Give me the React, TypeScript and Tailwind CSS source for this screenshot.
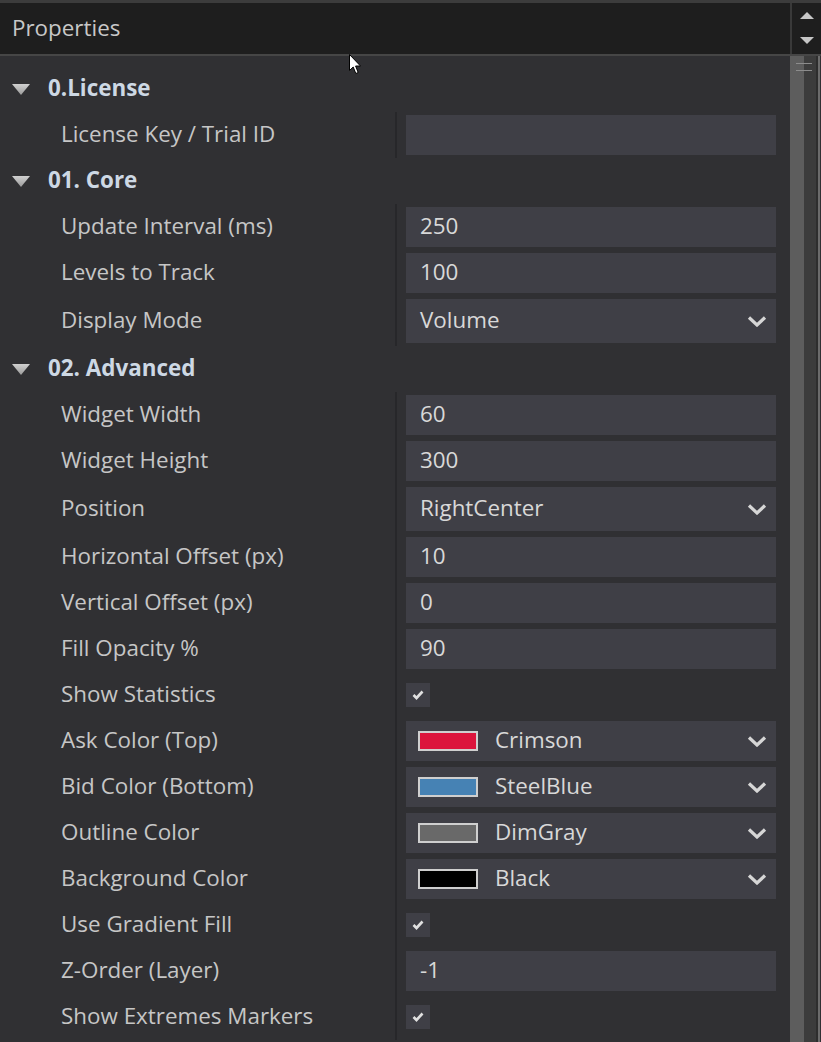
import React from 'react';

type Row =
  | { kind: 'section'; title: string }
  | { kind: 'text'; label: string; value: string }
  | { kind: 'select'; label: string; value: string }
  | { kind: 'check'; label: string }
  | { kind: 'color'; label: string; value: string; swatch: string };

const rows: Row[] = [
  { kind: 'section', title: '0.License' },
  { kind: 'text', label: 'License Key / Trial ID', value: '' },
  { kind: 'section', title: '01. Core' },
  { kind: 'text', label: 'Update Interval (ms)', value: '250' },
  { kind: 'text', label: 'Levels to Track', value: '100' },
  { kind: 'select', label: 'Display Mode', value: 'Volume' },
  { kind: 'section', title: '02. Advanced' },
  { kind: 'text', label: 'Widget Width', value: '60' },
  { kind: 'text', label: 'Widget Height', value: '300' },
  { kind: 'select', label: 'Position', value: 'RightCenter' },
  { kind: 'text', label: 'Horizontal Offset (px)', value: '10' },
  { kind: 'text', label: 'Vertical Offset (px)', value: '0' },
  { kind: 'text', label: 'Fill Opacity %', value: '90' },
  { kind: 'check', label: 'Show Statistics' },
  { kind: 'color', label: 'Ask Color (Top)', value: 'Crimson', swatch: '#dc143c' },
  { kind: 'color', label: 'Bid Color (Bottom)', value: 'SteelBlue', swatch: '#4682b4' },
  { kind: 'color', label: 'Outline Color', value: 'DimGray', swatch: '#696969' },
  { kind: 'color', label: 'Background Color', value: 'Black', swatch: '#000000' },
  { kind: 'check', label: 'Use Gradient Fill' },
  { kind: 'text', label: 'Z-Order (Layer)', value: '-1' },
  { kind: 'check', label: 'Show Extremes Markers' },
];

const Chevron = () => (
  <svg width="20" height="12" viewBox="0 0 20 12" className="shrink-0">
    <path d="M2 2.5 L10 10 L18 2.5" fill="none" stroke="#d6d6d6" strokeWidth="3.2" />
  </svg>
);

const Check = () => (
  <svg width="12" height="10" viewBox="0 0 12 10">
    <path d="M1.5 5 L4.5 8 L10.5 1.5" fill="none" stroke="#e0e0e0" strokeWidth="2.6" />
  </svg>
);

const Caret = () => (
  <svg width="18" height="11" viewBox="0 0 18 11">
    <defs>
      <linearGradient id="caret" x1="0" y1="0" x2="0" y2="1">
        <stop offset="0" stopColor="#d0d0d0" />
        <stop offset="1" stopColor="#9a9a9a" />
      </linearGradient>
    </defs>
    <polygon points="0,0 18,0 9,11" fill="url(#caret)" />
  </svg>
);

function Value({ row }: { row: Row }) {
  if (row.kind === 'check') {
    return (
      <div className="w-[24px] h-[24px] bg-[#3f3f46] flex items-center justify-center">
        <Check />
      </div>
    );
  }
  if (row.kind === 'select') {
    return (
      <div className="w-[370px] h-[44px] bg-[#3f3f46] flex items-center pl-[14px] pr-[9px] text-[#d8d8d8]">
        <span className="flex-1 pb-[1px]">{row.value}</span>
        <Chevron />
      </div>
    );
  }
  if (row.kind === 'color') {
    return (
      <div className="w-[370px] h-[40px] bg-[#3f3f46] flex items-center pl-[12px] pr-[9px] text-[#d8d8d8]">
        <div
          className="w-[60px] h-[20px] border-2 border-[#cfcfcf] shrink-0"
          style={{ backgroundColor: row.swatch }}
        />
        <span className="flex-1 ml-[17px] pb-[1px]">{row.value}</span>
        <Chevron />
      </div>
    );
  }
  if (row.kind === 'text') {
    return (
      <div className="w-[370px] h-[40px] bg-[#3f3f46] flex items-center pl-[14px] pb-[1px] text-[#d8d8d8]">
        {row.value}
      </div>
    );
  }
  return null;
}

function PropertyRow({ row }: { row: Row }) {
  if (row.kind === 'section') {
    return (
      <div className="h-[46px] flex items-center">
        <div className="ml-[12px] w-[36px]">
          <Caret />
        </div>
        <span className="font-bold text-[#cdd8e4] pb-[1px]">{row.title}</span>
      </div>
    );
  }
  const tall = row.kind === 'select';
  return (
    <div className={`flex ${tall ? 'h-[50px]' : 'h-[46px]'}`}>
      <div className="w-[395px] pl-[61px] pb-[1px] flex items-center text-[#c6c6c6]">{row.label}</div>
      <div className="w-[2px] bg-[#27272a]" />
      <div className="flex-1 pl-[9px] flex items-center">
        <Value row={row} />
      </div>
    </div>
  );
}

export default function App() {
  return (
    <div className="relative w-[821px] h-[1042px] overflow-hidden bg-[#303033] flex flex-col font-['Open_Sans',sans-serif] text-[22.4px] leading-none">
      <div className="h-[56px] shrink-0 flex bg-[#1e1e1e] border-t-[3px] border-t-[#3c3c3c] border-b-2 border-b-[#464646]">
        <div className="flex-1 flex items-center pl-[12px] pb-[1px] text-[#c8c8c8]">Properties</div>
        <div className="w-[2px] bg-[#393939]" />
        <div className="w-[29px] flex flex-col items-center justify-between pt-[9px] pb-[10px]">
          <svg width="14" height="7" viewBox="0 0 14 7">
            <polygon points="7,0 14,7 0,7" fill="#c6c6c6" />
          </svg>
          <svg width="14" height="7" viewBox="0 0 14 7">
            <polygon points="0,0 14,0 7,7" fill="#c6c6c6" />
          </svg>
        </div>
      </div>

      <div className="flex flex-1">
        <div className="w-[790px] pt-[10px]">
          {rows.map((row, i) => (
            <PropertyRow key={i} row={row} />
          ))}
        </div>

        {/* scrollbar */}
        <div className="relative w-[31px] flex">
          <div className="w-[14px] bg-[#5d5d5d]" />
          <div className="w-[12px] bg-[#3c3c3c]" />
          <div className="w-[2px] bg-[#2e2e2e]" />
          <div className="w-[2px] bg-[#6c6c6c]" />
          <div className="w-[1px] bg-[#303033]" />
          <div className="absolute left-[6px] top-[7px] w-[16px] h-[1px] bg-[#8c8c8c]" />
          <div className="absolute left-[6px] top-[14px] w-[16px] h-[1px] bg-[#8c8c8c]" />
        </div>
      </div>

      {/* mouse pointer */}
      <svg className="absolute left-[349px] top-[54px]" width="13" height="21" viewBox="0 0 13 21">
        <path
          d="M0.5 0.5 L0.5 16.5 L4.2 13 L6.8 19.5 L9.2 18.5 L6.6 12 L11.5 12 Z"
          fill="#ffffff"
          stroke="#000000"
          strokeWidth="1"
        />
      </svg>
    </div>
  );
}
